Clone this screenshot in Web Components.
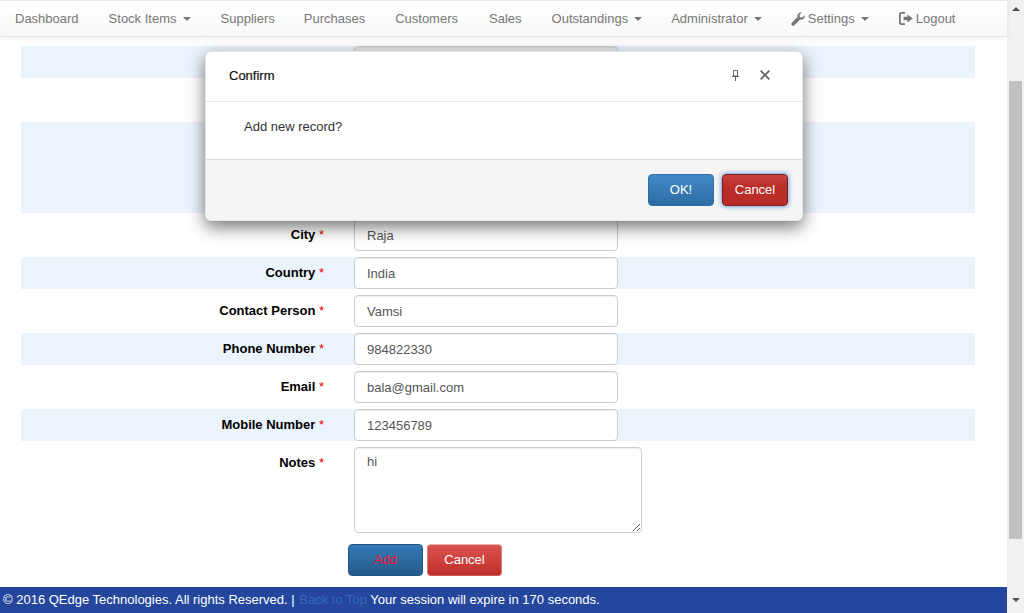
<!DOCTYPE html>
<html>
<head>
<meta charset="utf-8">
<title>Confirm</title>
<style>
  html, body { margin: 0; height: 100%; overflow: hidden; }
  body { font: 13px "Liberation Sans", Arial, sans-serif; color: #333; }
</style>
</head>
<body>
<app-shell>
  <app-navbar></app-navbar>
  <record-form>
    <form-row striped input-state="disabled"></form-row>
    <form-row></form-row>
    <form-row striped kind="tall"></form-row>
    <form-row label="City" value="Raja"></form-row>
    <form-row striped label="Country" value="India"></form-row>
    <form-row label="Contact Person" value="Vamsi"></form-row>
    <form-row striped label="Phone Number" value="984822330"></form-row>
    <form-row label="Email" value="bala@gmail.com"></form-row>
    <form-row striped label="Mobile Number" value="123456789"></form-row>
    <form-row label="Notes" value="hi" kind="notes"></form-row>
  </record-form>
  <app-footer></app-footer>
  <confirm-dialog></confirm-dialog>
</app-shell>

<script>
const caret = `<i class="caret"></i>`;

class AppShell extends HTMLElement {
  constructor() {
    super();
    this.attachShadow({ mode: 'open' });
    this.shadowRoot.innerHTML = `
    <style>
      :host { display: flex; position: relative; height: 613px; overflow: hidden; background: #fff; }
      #page { flex: 1; min-width: 0; display: flex; flex-direction: column; height: 613px; }
      #bar { width: 17px; background: #f1f1f1; display: flex; flex-direction: column; align-items: center; box-sizing: border-box; padding: 0 1px 0 2px; }
      .arrow { width: 0; height: 0; border-left: 4px solid transparent; border-right: 4px solid transparent; }
      #up { border-bottom: 4px solid #505050; margin-top: 7px; }
      #thumb { width: 13px; height: 458px; background: #c1c1c1; margin-top: 70px; margin-left: -1px; }
      #down { border-top: 4px solid #505050; margin-top: 59px; }
    </style>
    <div id="page"><slot></slot></div>
    <div id="bar"><div class="arrow" id="up"></div><div id="thumb"></div><div class="arrow" id="down"></div></div>
    `;
  }
}
customElements.define('app-shell', AppShell);

class AppNavbar extends HTMLElement {
  constructor() {
    super();
    this.attachShadow({ mode: 'open' });
    this.shadowRoot.innerHTML = `
    <style>
      :host { display: flex; height: 37px; flex-shrink: 0; box-sizing: border-box; border-top: 1px solid #e8e8e8; border-bottom: 1px solid #e4e4e4;
        background: linear-gradient(to bottom, #fff 0, #f8f8f8 100%); box-shadow: 0 1px 5px rgba(0,0,0,.075); color: #777; font-size: 13px; position: relative; z-index: 1; }
      a { display: flex; align-items: center; padding: 0 15px; white-space: nowrap; }
      a.tight { padding-right: 14px; }
      a.wide { padding-right: 16px; }
      .caret { display: inline-block; width: 0; height: 0; margin-left: 6px; border-top: 4px solid #777; border-left: 4px solid transparent; border-right: 4px solid transparent; }
      svg { fill: #777; display: block; margin-right: 3px; }
    </style>
    <a>Dashboard</a>
    <a>Stock Items ${caret}</a>
    <a class="tight">Suppliers</a>
    <a>Purchases</a>
    <a class="wide">Customers</a>
    <a>Sales</a>
    <a class="tight">Outstandings ${caret}</a>
    <a class="tight">Administrator ${caret}</a>
    <a><svg width="14" height="14" viewBox="0 0 14 14"><path d="M13.6 3.2c.3 1.3-.1 2.6-1 3.5-1 .9-2.300 1.200-3.500.9L3.400 13.300c-.7.700-1.900.700-2.600 0s-.7-1.900 0-2.600l5.700-5.700c-.3-1.200 0-2.500.9-3.500.9-.9 2.200-1.300 3.500-1L8.500 2.900l.4 2.300 2.300.4 2.400-2.400z"/></svg>Settings ${caret}</a>
    <a><svg width="14" height="13" viewBox="0 0 14 13"><path d="M0 2.200C0 1 1 0 2.200 0H6v1.800H2.800c-.6 0-1 .4-1 1v7.400c0 .6.400 1 1 1H6V13H2.200C1 13 0 12 0 10.800zM8.500 2.500l5.300 4-5.300 4V8.300H4.500V4.700h4z"/></svg>Logout</a>
    `;
  }
}
customElements.define('app-navbar', AppNavbar);

class RecordForm extends HTMLElement {
  constructor() {
    super();
    this.attachShadow({ mode: 'open' });
    this.shadowRoot.innerHTML = `
    <style>
      :host { display: flex; flex-direction: column; flex: 1; min-height: 0; gap: 6px; padding: 9px 32px 0 21px; }
      #actions { display: flex; gap: 4px; padding: 5px 0 0 327px; }
      button { width: 75px; height: 32px; border-radius: 4px; font: 13px "Liberation Sans", Arial, sans-serif; padding: 0 0 1px; }
      #add { color: #ff1030; border: 1px solid #245580; background: linear-gradient(to bottom, #337ab7 0, #265a88 100%); }
      #cancel { color: #fff; background: linear-gradient(to bottom, #d9534f 0, #c12e2a 100%); border: 1px solid #b92c28; border-color: #e0b0ae #d0807c #c9605c; }
    </style>
    <slot></slot>
    <div id="actions"><button id="add">Add</button><button id="cancel">Cancel</button></div>
    `;
  }
}
customElements.define('record-form', RecordForm);

class FormRow extends HTMLElement {
  connectedCallback() {
    const label = this.getAttribute('label') || '';
    const value = this.getAttribute('value') || '';
    const kind = this.getAttribute('kind') || '';
    const field = kind === 'notes'
      ? `<textarea id="field" readonly>${value}</textarea>`
      : `<input id="field" value="${value}" readonly ${this.getAttribute('input-state') === 'disabled' ? 'disabled' : ''}>`;
    this.attachShadow({ mode: 'open' });
    this.shadowRoot.innerHTML = `
    <style>
      :host { display: flex; min-height: 32px; flex-shrink: 0; }
      :host([striped]) { background: #ebf3fc; }
      :host([kind="tall"]) { height: 91px; }
      :host([kind="notes"]) { height: 86px; }
      #label { width: 303px; text-align: right; font-weight: bold; color: #000; padding-top: 8px; line-height: 16px; box-sizing: border-box; white-space: nowrap; }
      #label b { color: #e00; font-weight: normal; }
      #field { box-sizing: border-box; margin: 0 0 0 30px; width: 264px; height: 32px; border: 1px solid #ccc; border-radius: 4px; padding: 6px 12px; background: #fff;
        color: #555; font: 13px "Liberation Sans", Arial, sans-serif; outline: none; box-shadow: inset 0 1px 1px rgba(0,0,0,.075); }
      #field:disabled { background: #eaeaea; }
      textarea#field { width: 288px; height: 86px; resize: both; }
    </style>
    <div id="label">${label ? label + ' <b>*</b>' : ''}</div>
    ${kind === 'tall' ? '' : field}
    `;
  }
}
customElements.define('form-row', FormRow);

class AppFooter extends HTMLElement {
  constructor() {
    super();
    this.attachShadow({ mode: 'open' });
    this.shadowRoot.innerHTML = `
    <style>
      :host { display: block; height: 26px; flex-shrink: 0; background: #24479d; color: #fff; font-size: 13px; line-height: 26px; padding-left: 3px; white-space: nowrap; }
      a { color: #3468b2; margin-left: 1px; }
    </style>
    © 2016 QEdge Technologies. All rights Reserved. | <a>Back to Top</a> Your session will expire in 170 seconds.
    `;
  }
}
customElements.define('app-footer', AppFooter);

class ConfirmDialog extends HTMLElement {
  constructor() {
    super();
    this.attachShadow({ mode: 'open' });
    this.shadowRoot.innerHTML = `
    <style>
      :host { position: absolute; left: 205px; top: 51px; width: 598px; height: 170px; box-sizing: border-box; display: flex; flex-direction: column; z-index: 5;
        background: #fff; border: 1px solid #e6e6e6; border-radius: 6px; box-shadow: 0 6px 17px rgba(0,0,0,.55); color: #333; overflow: hidden; }
      header { height: 50px; box-sizing: border-box; border-bottom: 1px solid #e5e5e5; display: flex; align-items: center; padding: 0 32px 3px 23px; color: #111; }
      h4 { margin: 0; flex: 1; font: inherit; -webkit-text-stroke: .2px #111; }
      header svg { display: block; }
      #pin { margin-right: 20px; }
      #close { fill: #666; }
      main { height: 57px; box-sizing: border-box; padding: 17px 38px; line-height: 16px; color: #333; }
      footer { flex: 1; background: #f5f5f5; border-top: 1px solid #ddd; display: flex; justify-content: flex-end; align-items: flex-start; gap: 8px; padding: 14px 14px 0 0; }
      button { width: 66px; height: 32px; border-radius: 4px; color: #fff; font: 13px "Liberation Sans", Arial, sans-serif; padding: 0 0 1px; }
      #ok { border: 1px solid #2e6da4; background: linear-gradient(to bottom, #428bca 0, #2d6ca2 100%); }
      #no { border: 1px solid #761c19; background: linear-gradient(to bottom, #c9403c 0, #b92c28 45%, #b92c28 100%); box-shadow: 0 0 4px 1px rgba(90,140,220,.8); }
    </style>
    <header>
      <h4>Confirm</h4>
      <svg id="pin" width="9" height="11" viewBox="0 0 9 11" fill="none" stroke="#666" stroke-width="1"><path d="M2.500 .5h4v5.500h-4zM1 6.500h7M4.500 6.500V11"/></svg>
      <svg id="close" width="10" height="10" viewBox="0 0 10 10"><path d="M1.300 0L5 3.700 8.700 0 10 1.300 6.300 5 10 8.700 8.700 10 5 6.300 1.300 10 0 8.700 3.700 5 0 1.300z"/></svg>
    </header>
    <main>Add new record?</main>
    <footer><button id="ok">OK!</button><button id="no">Cancel</button></footer>
    `;
  }
}
customElements.define('confirm-dialog', ConfirmDialog);
</script>
</body>
</html>
